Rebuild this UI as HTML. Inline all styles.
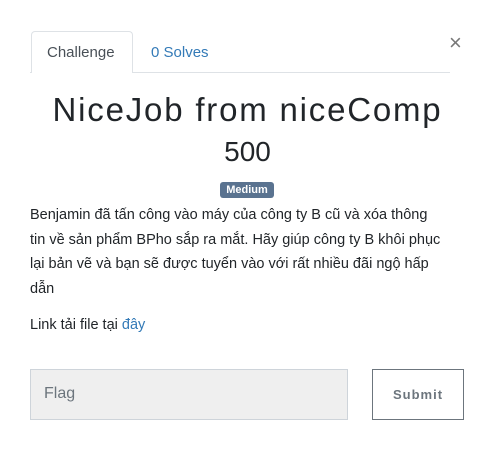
<!DOCTYPE html>
<html><head><meta charset="utf-8"><style>
body{margin:0;width:495px;height:466px;background:#fff;font-family:"Liberation Sans",sans-serif;color:#212529;position:relative;overflow:hidden}
.a{position:absolute}
</style></head><body>
<div class="a" style="left:30px;top:72px;width:420px;height:1px;background:#dee2e6"></div>
<div class="a" style="left:31px;top:31px;width:102px;height:42px;background:#fff;border:1px solid #dee2e6;border-bottom:none;border-radius:4px 4px 0 0;box-sizing:border-box"></div>
<div class="a" style="left:47px;top:44px;font-size:15px;color:#495057">Challenge</div>
<div class="a" style="left:151px;top:44px;font-size:15px;color:#337ab7">0 Solves</div>
<div class="a" style="left:449px;top:30px;font-size:22px;color:#777">×</div>
<div class="a" style="left:0;width:495px;top:91px;text-align:center;font-size:33px;letter-spacing:1.8px;color:#212529">NiceJob from niceComp</div>
<div class="a" style="left:0;width:495px;top:136px;text-align:center;font-size:28px">500</div>
<div class="a" style="left:220px;top:182px;width:54px;height:16px;background:#5a7390;border-radius:3px;color:#fff;font-size:11px;font-weight:bold;text-align:center;line-height:16px">Medium</div>
<div class="a" style="left:30px;top:203px;width:460px;font-size:14.5px;line-height:24.5px;white-space:nowrap">Benjamin đã tấn công vào máy của công ty B cũ và xóa thông<br>tin về sản phẩm BPho sắp ra mắt. Hãy giúp công ty B khôi phục<br>lại bản vẽ và bạn sẽ được tuyển vào với rất nhiều đãi ngộ hấp<br>dẫn</div>
<div class="a" style="left:30px;top:317px;font-size:14.5px">Link tải file tại <span style="color:#337ab7">đây</span></div>
<div class="a" style="left:30px;top:369px;width:318px;height:51px;background:#efefef;border:1px solid #ced4da;box-sizing:border-box"></div>
<div class="a" style="left:44px;top:385px;font-size:16px;color:#6c757d">Flag</div>
<div class="a" style="left:372px;top:369px;width:92px;height:51px;border:1px solid #6c757d;box-sizing:border-box;text-align:center;line-height:49px;font-size:13px;font-weight:bold;letter-spacing:1px;color:#6c757d">Submit</div>
</body></html>
